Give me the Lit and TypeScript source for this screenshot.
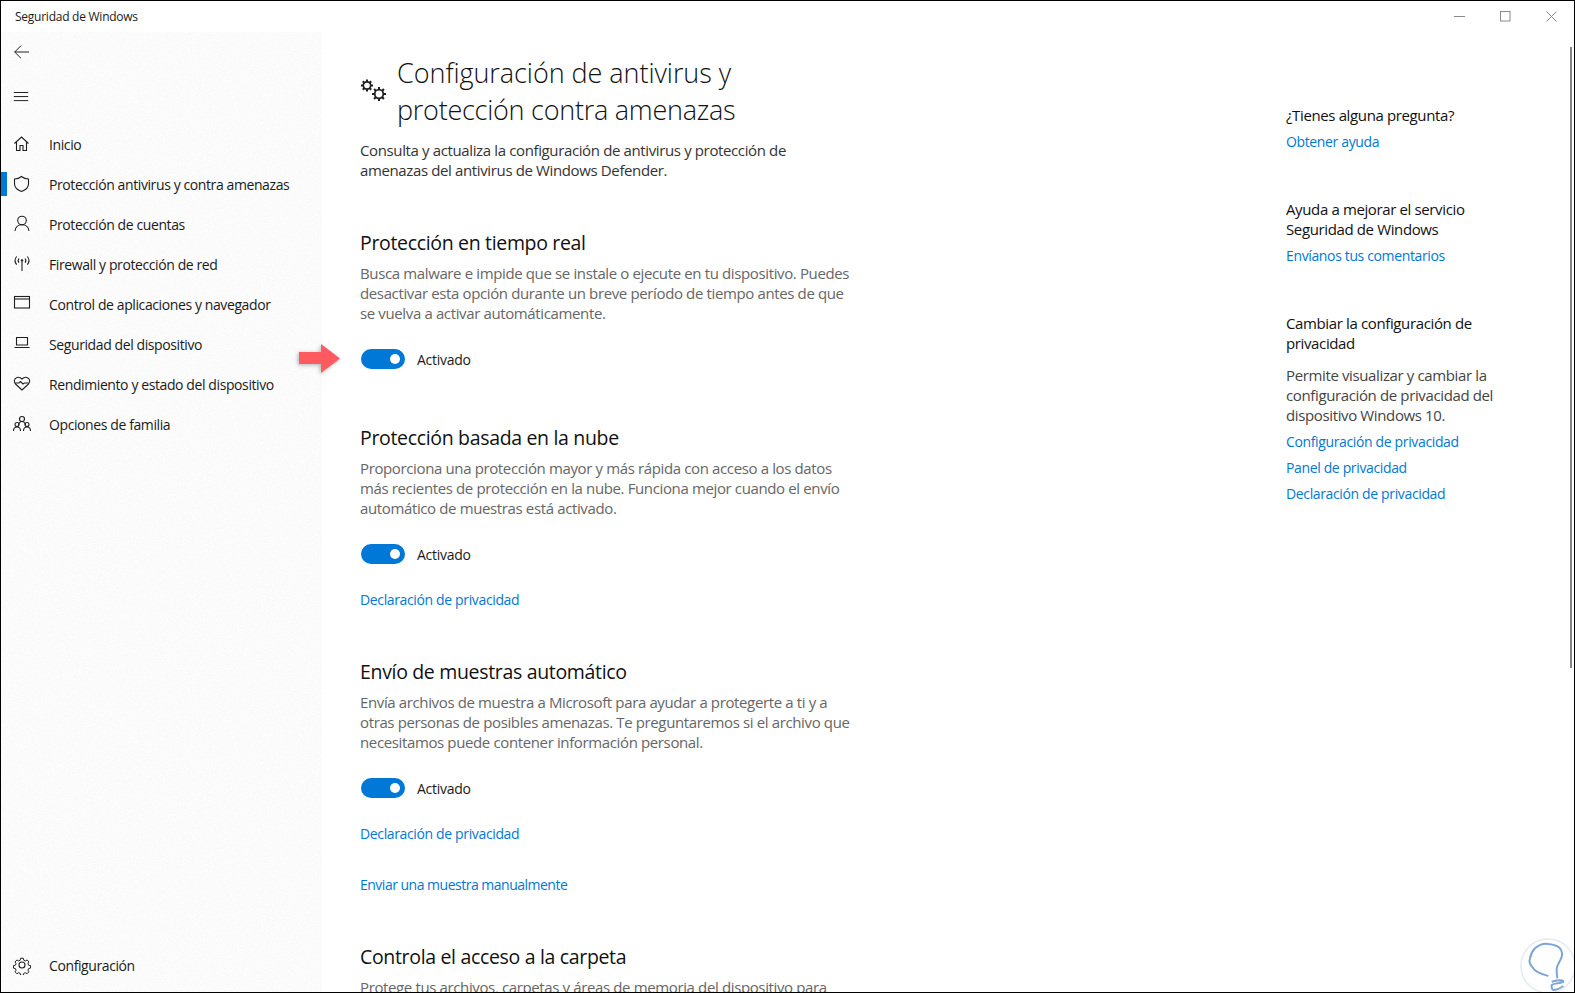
import { LitElement, html, css, svg } from "lit";
import { customElement } from "lit/decorators.js";

const s = (inner: unknown, size = 20, vb = "0 0 20 20") =>
  html`<svg class="ic" width=${size} height=${size} viewBox=${vb} fill="none" stroke="#1f1f1f" stroke-width="1.1">${inner}</svg>`;

const icons = {
  home: s(svg`<path d="M2.500 9.500 9.500 3l7 6.500M4.500 8v8.500h3.500v-5h3v5h3.500V8"/>`),
  shield: s(svg`<path d="M9.500 2.500c2 1.600 4.500 2.400 7 2.500v5c0 3.800-3 6-7 7.500-4-1.500-7-3.700-7-7.500V5c2.500-.1 5-.9 7-2.500Z"/>`),
  user: s(svg`<circle cx="10" cy="6.500" r="4.300"/><path d="M3 17c.3-3.800 3.200-6.200 7-6.200s6.700 2.400 7 6.200"/>`),
  wifi: s(svg`<path d="M10 8v9"/><circle cx="10" cy="6.500" r=".8"/><path d="M7 4.500c-1 1.200-1 3 0 4.200M13 4.500c1 1.200 1 3 0 4.200M4.700 2.500c-2 2.400-2 5.800 0 8.200M15.300 2.500c2 2.400 2 5.800 0 8.200"/>`),
  browser: s(svg`<rect x="2.500" y="2.500" width="15" height="11.500"/><path d="M2.500 5h15"/>`),
  laptop: s(svg`<path d="M4.500 3.500h11v7.500h-11zM2.500 13.500h15"/>`),
  heart: s(svg`<path d="M10 16 3.500 10C1.500 7.800 2 4.500 5 3.500c2-.6 3.700.3 5 1.500 1.300-1.200 3-2.100 5-1.500 3 1 3.500 4.300 1.500 6.500Z"/><path d="M2.500 9h4.500l1.500-1.500 2.500 2.500 1.500-1h4.500"/>`),
  family: s(svg`<circle cx="10" cy="5" r="2.500"/><circle cx="5" cy="10.500" r="2"/><circle cx="15" cy="10.500" r="2"/><path d="M1.500 17c0-2.500 1.500-4 3.500-4s3.500 1.500 3.500 4M11.500 17c0-2.500 1.500-4 3.500-4s3.500 1.500 3.500 4M6.500 11c.5-2 2-3.500 3.500-3.500s3 1.500 3.500 3.500"/>`),
  gear: s(svg`<circle cx="10" cy="10" r="3"/><path d="M8.500 2.500h3l.5 2.200 1.700.8 2-1.100 2 2.200-1.100 1.900.7 1.700 2.200.5-.1 2.800-2.100.5-.7 1.700 1.100 1.900-2 2.100-2-1.100-1.700.7-.5 2.200h-3l-.5-2.200-1.700-.7-2 1.100-2-2.100 1.100-1.900-.7-1.700-2.100-.5-.1-2.800 2.200-.5.700-1.700-1.100-1.900 2-2.200 2 1.100 1.700-.8Z" transform="translate(1 1) scale(.9)"/>`),
};

const nav = [
  ["Inicio", icons.home],
  ["Protección antivirus y contra amenazas", icons.shield, true],
  ["Protección de cuentas", icons.user],
  ["Firewall y protección de red", icons.wifi],
  ["Control de aplicaciones y navegador", icons.browser],
  ["Seguridad del dispositivo", icons.laptop],
  ["Rendimiento y estado del dispositivo", icons.heart],
  ["Opciones de familia", icons.family],
] as const;

const smallGear = (r: number, hole: number, tip: number, cx: number, cy: number) => {
  const teeth = [0, 45, 90, 135].map(
    (a) => svg`<path d="M${cx} ${cy - tip}V${cy + tip}" stroke-width="2" transform="rotate(${a} ${cx} ${cy})"/>`
  );
  return svg`${teeth}<circle cx=${cx} cy=${cy} r=${r} fill="#1f1f1f" stroke="none"/><circle cx=${cx} cy=${cy} r=${hole} fill="#fff" stroke="none"/>`;
};

@customElement("app-root")
export class AppRoot extends LitElement {
  static styles = css`
    :host {
      display: block;
      width: 1575px;
      height: 994px;
      overflow: hidden;
      background: #fff;
      font-family: "Open Sans", "Noto Sans", sans-serif;
      font-size: 14px;
      color: #1a1a1a;
    }
    * { box-sizing: border-box; }
    .window {
      position: relative;
      width: 1575px;
      height: 993px;
      border: 1px solid #000;
      overflow: hidden;
      display: grid;
      grid-template-columns: 321px 1fr;
      grid-template-rows: 31px 1fr;
      background: #fff;
    }
    .titlebar {
      grid-column: 1 / 3;
      display: flex;
      align-items: center;
      justify-content: space-between;
      padding-left: 14px;
      font-size: 12px;
      letter-spacing: -0.25px;
      background: #fff;
    }
    .wctl { display: flex; }
    .wctl span { width: 46px; height: 30px; display: flex; align-items: center; justify-content: center; }
    .sidebar {
      position: relative;
      background: #fdfdfd;
      display: flex;
      flex-direction: column;
    }
    .sidebar > * { position: relative; }
    .sidebar > .noise { position: absolute; inset: 0; pointer-events: none; }
    .toolicon { height: 40px; padding-left: 11px; display: flex; align-items: center; }
    .toolicon + .toolicon { margin-top: 4px; height: 41px; margin-bottom: 7px; }
    .item {
      height: 40px;
      display: flex;
      align-items: center;
      gap: 17px;
      padding-left: 11px;
      letter-spacing: -0.4px;
      white-space: nowrap;
    }
    .item.active::before {
      content: "";
      position: absolute;
      left: 0;
      top: 8px;
      width: 6px;
      height: 24px;
      background: #0078d7;
    }
    .item .ic { flex: none; }
    .spacer { flex: 1; }
    .settings { margin-bottom: 7px; }
    .main {
      min-width: 0;
      display: grid;
      grid-template-columns: 920px 1fr;
      overflow: hidden;
    }
    .content { padding: 22px 0 0 38px; white-space: nowrap; font-size: 15px; letter-spacing: -0.37px; }
    .head { display: flex; align-items: flex-start; }
    .head svg { margin-top: 19px; flex: none; }
    h1 {
      margin: 0 0 0 11px;
      font-weight: 300;
      font-size: 27px;
      line-height: 37px;
      letter-spacing: -0.25px;
      color: #111;
    }
    h1 .l1 { letter-spacing: -0.05px; }
    .lead { margin: 12px 0 0; line-height: 20px; color: #333; }
    h2 {
      margin: 0;
      font-weight: 400;
      font-size: 19.500px;
      line-height: 28px;
      letter-spacing: -0.33px;
      color: #111;
    }
    section { margin-top: 48px; }
    section.s1 { margin-top: 49px; }
    section.s2 { margin-top: 55px; }
    section p { margin: 6px 0 0; line-height: 20px; color: #666; }
    .toggle-row {
      display: flex;
      align-items: center;
      gap: 12px;
      margin: 26px 0 0 1px;
      height: 20px;
      font-size: 14px;
      letter-spacing: -0.27px;
    }
    .toggle {
      width: 44px;
      height: 20px;
      border-radius: 10px;
      background: #0078d7;
      display: flex;
      align-items: center;
      justify-content: flex-end;
      padding-right: 5px;
    }
    .toggle i { width: 10px; height: 10px; border-radius: 50%; background: #fff; display: block; }
    a {
      color: #0078d7;
      text-decoration: none;
      display: block;
      line-height: 20px;
      font-size: 14px;
      letter-spacing: -0.36px;
    }
    .link1 { margin-top: 26px; }
    .link2 { margin-top: 31px; letter-spacing: -0.5px; }
    aside { padding: 73px 0 0 44px; white-space: nowrap; line-height: 20px; font-size: 15px; letter-spacing: -0.37px; }
    aside .block { margin-bottom: 47px; }
    aside .t { color: #111; }
    aside p { margin: 12px 0 0; color: #444; }
    aside a { margin-top: 7px; }
    aside a + a { margin-top: 6px; }
    .scroll {
      position: absolute;
      right: 2px;
      top: 46px;
      width: 2px;
      height: 621px;
      background: #858585;
    }
    .arrow { position: absolute; left: 295px; top: 342px; filter: drop-shadow(-1px 1px 2px rgba(0, 0, 0, 0.3)); }
    .mark { position: absolute; right: 0; bottom: 0; }
  `;

  private section(cls: string, title: string, lines: string[], links: string[]) {
    return html`<section class=${cls}>
      <h2>${title}</h2>
      <p>${lines.map((l, i) => html`${i ? html`<br />` : ""}${l}`)}</p>
      <div class="toggle-row"><div class="toggle"><i></i></div><span>Activado</span></div>
      ${links.map((l, i) => html`<a class=${i ? "link2" : "link1"} href="#">${l}</a>`)}
    </section>`;
  }

  render() {
    return html`<div class="window">
      <div class="titlebar">
        <span>Seguridad de Windows</span>
        <div class="wctl">
          <span><svg width="11" height="11" viewBox="0 0 11 11"><path d="M0 5.500h11" stroke="#8a8a8a"/></svg></span>
          <span><svg width="11" height="11" viewBox="0 0 11 11"><rect x=".5" y=".5" width="9.500" height="9.500" fill="none" stroke="#8a8a8a"/></svg></span>
          <span><svg width="11" height="11" viewBox="0 0 11 11"><path d="m.5.5 10 10m0-10-10 10" stroke="#8a8a8a" fill="none"/></svg></span>
        </div>
      </div>
      <div class="sidebar">
        <svg class="noise" width="321" height="961">
          <filter id="n" x="0" y="0" width="100%" height="100%">
            <feTurbulence type="fractalNoise" baseFrequency="0.8" numOctaves="2" seed="3"/>
            <feColorMatrix values="0 0 0 0 0.55  0 0 0 0 0.55  0 0 0 0 0.55  0 0 0 0.18 -0.06"/>
          </filter>
          <rect width="321" height="961" filter="url(#n)"/>
        </svg>
        <div class="toolicon">
          ${s(svg`<path d="M18 10H2M9 3l-7 7 7 7"/>`, 18, "0 0 18 20")}
        </div>
        <div class="toolicon">
          ${s(svg`<path d="M1 5h16M1 9.500h16M1 14h16"/>`, 18, "0 0 18 20")}
        </div>
        ${nav.map(
          ([label, icon, active]) => html`<div class="item ${active ? "active" : ""}">${icon}<span>${label}</span></div>`
        )}
        <div class="spacer"></div>
        <div class="item settings">${icons.gear}<span>Configuración</span></div>
      </div>
      <div class="main">
        <div class="content">
          <div class="head">
            <svg width="26" height="30" viewBox="0 0 26 30" fill="none" stroke="#1f1f1f">
              ${smallGear(4.5, 2.8, 6, 7, 12.5)}${smallGear(5.2, 3.4, 7, 19, 21)}
            </svg>
            <h1><span class="l1">Configuración de antivirus y</span><br />protección contra amenazas</h1>
          </div>
          <p class="lead">Consulta y actualiza la configuración de antivirus y protección de<br />amenazas del antivirus de Windows Defender.</p>
          ${this.section("s1", "Protección en tiempo real", [
            "Busca malware e impide que se instale o ejecute en tu dispositivo. Puedes",
            "desactivar esta opción durante un breve período de tiempo antes de que",
            "se vuelva a activar automáticamente.",
          ], [])}
          ${this.section("s2", "Protección basada en la nube", [
            "Proporciona una protección mayor y más rápida con acceso a los datos",
            "más recientes de protección en la nube. Funciona mejor cuando el envío",
            "automático de muestras está activado.",
          ], ["Declaración de privacidad"])}
          ${this.section("s3", "Envío de muestras automático", [
            "Envía archivos de muestra a Microsoft para ayudar a protegerte a ti y a",
            "otras personas de posibles amenazas. Te preguntaremos si el archivo que",
            "necesitamos puede contener información personal.",
          ], ["Declaración de privacidad", "Enviar una muestra manualmente"])}
          <section class="s4">
            <h2>Controla el acceso a la carpeta</h2>
            <p>Protege tus archivos, carpetas y áreas de memoria del dispositivo para</p>
          </section>
        </div>
        <aside>
          <div class="block">
            <div class="t">¿Tienes alguna pregunta?</div>
            <a href="#">Obtener ayuda</a>
          </div>
          <div class="block">
            <div class="t">Ayuda a mejorar el servicio<br />Seguridad de Windows</div>
            <a href="#">Envíanos tus comentarios</a>
          </div>
          <div class="block">
            <div class="t">Cambiar la configuración de<br />privacidad</div>
            <p>Permite visualizar y cambiar la<br />configuración de privacidad del<br />dispositivo Windows 10.</p>
            <a href="#">Configuración de privacidad</a>
            <a href="#">Panel de privacidad</a>
            <a href="#">Declaración de privacidad</a>
          </div>
        </aside>
      </div>
      <div class="scroll"></div>
      <svg class="arrow" width="48" height="34" viewBox="0 0 48 34">
        <path d="M3 9h22V1l19 14.500L25 30v-9H3Z" fill="#ff5a5f"/>
      </svg>
      <svg class="mark" width="60" height="60" viewBox="0 0 60 60" fill="none">
        <circle cx="34" cy="34" r="27" fill="#fff" stroke="#e4ebf4" stroke-width="1.500"/>
        <path d="M34.300 44C28 42 21 40 19.300 36.300 16 33 15 29 16 26.300c1-5 3-8 5-10 4-3.500 9-5 13.300-4.300 5 .5 9.500 1.500 11.700 4.300 2 3 2.500 6 1.700 8.400-1 4-4.500 7.500-5 11.600-.3 3.500.3 7 .6 10" stroke="#7fa5d4" stroke-width="2"/>
        <path d="M37.700 49.700c4-1 9-2.500 11.600-.7 1 2-9 2-11.600 4-.5 3 1 5 1.600 5 3 0 7-2 10-4" stroke="#7fa5d4" stroke-width="2"/>
      </svg>
    </div>`;
  }
}
